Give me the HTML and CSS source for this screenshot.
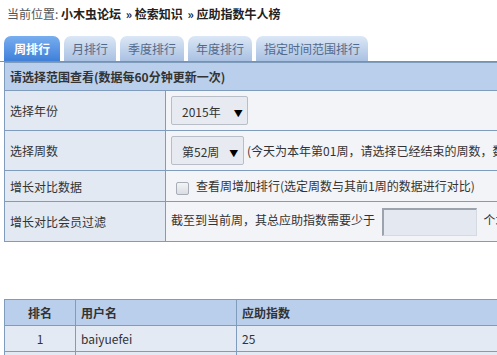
FILE: index.html
```html
<!DOCTYPE html>
<html>
	<head>
		<meta charset="utf-8">
		<title>应助指数牛人榜</title>
		<link rel="stylesheet" href="styles.css">
	</head>
	<body>
		<div class="crumb">当前位置: <b>小木虫论坛</b> <b>&raquo;&nbsp;检索知识</b> <b>&raquo;&nbsp;应助指数牛人榜</b></div>

		<ul class="tabs">
			<li class="on">周排行</li>
			<li>月排行</li>
			<li>季度排行</li>
			<li>年度排行</li>
			<li>指定时间范围排行</li>
		</ul>

		<table class="filter">
			<tr>
				<th colspan="2">请选择范围查看(数据每60分钟更新一次)</th>
			</tr>
			<tr class="tall">
				<td class="label">选择年份</td>
				<td><span class="sel sel_year">2015年<i>&#9660;</i></span></td>
			</tr>
			<tr class="tall">
				<td class="label">选择周数</td>
				<td><span class="sel sel_week">第52周<i>&#9660;</i></span><span class="note">(今天为本年第01周，请选择已经结束的周数，数据统计到上周日)</span></td>
			</tr>
			<tr>
				<td class="label">增长对比数据</td>
				<td><span class="chk"></span>查看周增加排行(选定周数与其前1周的数据进行对比)</td>
			</tr>
			<tr class="tall">
				<td class="label">增长对比会员过滤</td>
				<td>截至到当前周，其总应助指数需要少于 <span class="num"></span> 个才显示</td>
			</tr>
		</table>

		<table class="rank">
			<tr>
				<th class="c_no">排名</th>
				<th class="c_user">用户名</th>
				<th>应助指数</th>
			</tr>
			<tr>
				<td class="c_no">1</td>
				<td>baiyuefei</td>
				<td>25</td>
			</tr>
			<tr>
				<td class="c_no"></td>
				<td></td>
				<td></td>
			</tr>
		</table>
	</body>
</html>
```

FILE: styles.css
```css
html, body {overflow:hidden}
body {margin:0;width:700px;font-family:"Noto Sans CJK SC","Liberation Sans",sans-serif;font-size:12px;color:#333}
.crumb {padding:6px 0 0 7px;height:20px;line-height:16px;color:#555}
.crumb b {color:#222;margin-right:2px}

ul.tabs {list-style:none;margin:10px 0 0 0;padding:0 0 0 4px;height:25px;border-bottom:1px solid #6d92c4;display:flex;gap:4px}
ul.tabs li {height:25px;line-height:26px;padding:0 8px;border-radius:7px 7px 0 0;background:linear-gradient(#dbe7f6,#a9c1e2);color:#52698c}
ul.tabs li.on {padding:0 10px;background:linear-gradient(#78aef0,#3f80d8);color:#fff;font-weight:bold}

table {border-collapse:collapse;margin-left:4px;width:660px}
table td, table th {border:1px solid #7f9cbd;padding:0 5px;text-align:left}
table th {background:#bacfec;font-weight:bold;color:#333}

table.filter th {height:27px}
table.filter td {height:30px;background:#f3f4f8}
table.filter tr.tall td {height:39px}
table.filter td.label {width:150px;background:#e2e9f3}

.sel {display:inline-block;vertical-align:middle;height:29px;line-height:29px;border:1px solid #b8bec8;border-radius:2px;background:#e7ebf1;padding:0 0 0 10px;box-sizing:border-box}
.sel i {font-style:normal;font-size:9px;display:inline-block;margin-left:13px;width:10px;color:#000}
.sel_year {width:77px}
.sel_week {width:73px;margin-right:3px}
.sel_week i {margin-left:10px}
.note {vertical-align:middle}
.chk {display:inline-block;vertical-align:middle;width:11px;height:11px;border:1px solid #a7aeb8;border-radius:2px;background:linear-gradient(#f4f4f4,#d9dde3);margin:0 7px 0 5px}
.num {display:inline-block;vertical-align:middle;width:95px;height:28px;box-sizing:border-box;border:1px solid #d5dae2;border-top:2px solid #9da3ad;border-left:2px solid #9da3ad;background:#e4e9f1;margin:0 4px}

table.rank {margin-top:57px}
table.rank th {height:25px}
table.rank td {height:25px;background:#e3eaf3}
table.rank .c_no {width:60px;text-align:center}
table.rank .c_user {width:150px}
```
